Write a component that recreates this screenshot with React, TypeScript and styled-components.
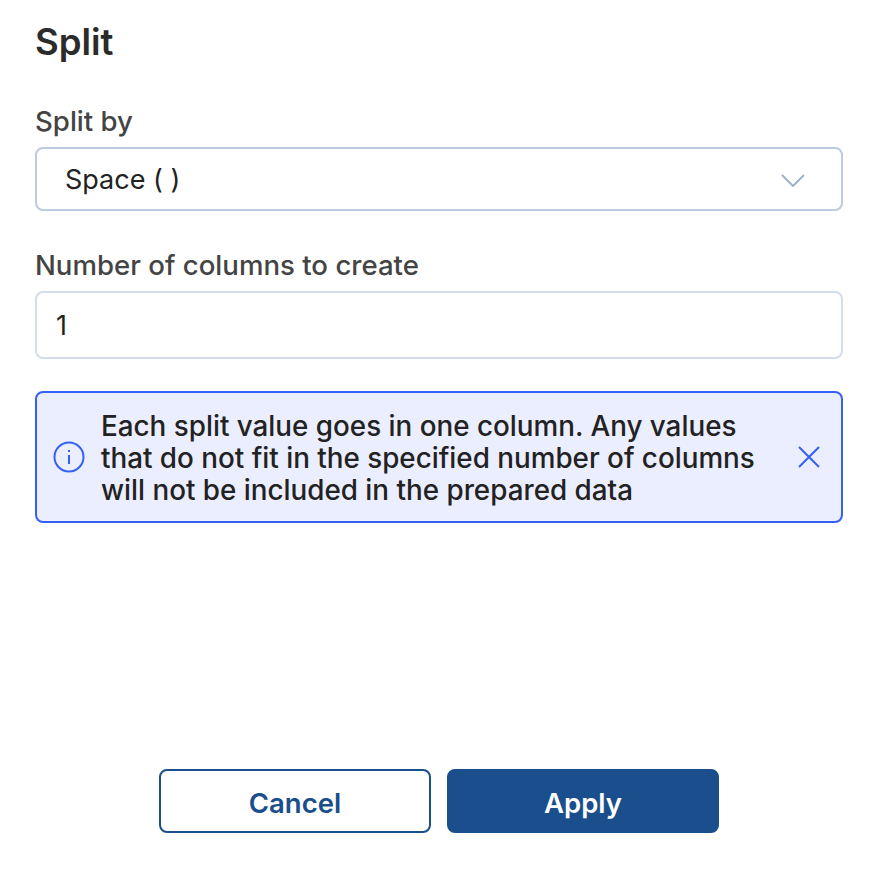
import React from 'react';
import styled, { createGlobalStyle } from 'styled-components';

const GlobalStyle = createGlobalStyle`
  html, body {
    margin: 0;
    padding: 0;
    background: #fff;
  }
`;

const Page = styled.div`
  width: 884px;
  height: 880px;
  box-sizing: border-box;
  padding: 21px 41px 47px 35px;
  display: flex;
  flex-direction: column;
  font-family: Inter, "Liberation Sans", sans-serif;
  color: #222;
`;

const Title = styled.h1`
  margin: 0 0 42px;
  font-size: 36.5px;
  line-height: 42px;
  font-weight: 600;
  color: #2b2b2b;
`;

const Label = styled.label`
  display: block;
  font-size: 27.6px;
  line-height: 32px;
  font-weight: 500;
  color: #444;
  margin-bottom: 10px;
`;

const Field = styled.div<{ $height: number; $border: string }>`
  height: ${(p) => p.$height}px;
  box-sizing: border-box;
  border: 2px solid ${(p) => p.$border};
  border-radius: 8px;
  display: flex;
  align-items: center;
  justify-content: space-between;
  font-size: 27px;
  line-height: 34px;
  color: #222;
`;

const SelectField = styled(Field)`
  padding: 2px 36px 0 28px;
  margin-bottom: 38px;
`;

const InputField = styled(Field)`
  padding: 2px 19px 0;
  margin-bottom: 32px;
`;

const Alert = styled.div`
  height: 132px;
  box-sizing: border-box;
  border: 2px solid #3660f4;
  border-radius: 8px;
  background: #ebeeff;
  display: flex;
  align-items: center;
  padding: 0 20px 0 15px;
`;

const AlertText = styled.div`
  flex: 1;
  margin: 2px 26px 0 15px;
  font-size: 27.8px;
  line-height: 32px;
  font-weight: 500;
  color: #222;
`;

const Footer = styled.div`
  margin-top: auto;
  display: flex;
  justify-content: center;
  gap: 16px;
`;

const Button = styled.button<{ $primary?: boolean }>`
  width: 272px;
  height: 64px;
  box-sizing: border-box;
  padding: 3px 0 0;
  border-radius: 8px;
  border: 2px solid #1a4e8c;
  background: ${(p) => (p.$primary ? '#1a4e8c' : '#fff')};
  color: ${(p) => (p.$primary ? '#fff' : '#1a4e8c')};
  font-family: inherit;
  font-size: 27.5px;
  font-weight: 600;
`;

export default function App() {
  return (
    <Page>
      <GlobalStyle />
      <Title>Split</Title>
      <Label>Split by</Label>
      <SelectField $height={64} $border="#bccbdf">
        Space ( )
        <svg width="24" height="13" viewBox="0 0 24 13" fill="none" stroke="#9fb2c8" strokeWidth="2">
          <path d="M1 1l11 11L23 1" />
        </svg>
      </SelectField>
      <Label>Number of columns to create</Label>
      <InputField $height={68} $border="#d3deea">1</InputField>
      <Alert>
        <svg width="34" height="34" viewBox="0 0 34 34" fill="none" stroke="#3660f4" strokeWidth="2">
          <circle cx="17" cy="17" r="14.5" />
          <path d="M17 15v9M17 10v2" />
        </svg>
        <AlertText>
          Each split value goes in one column. Any values that do not fit in the specified number of columns will not be included in the prepared data
        </AlertText>
        <svg width="24" height="24" viewBox="0 0 24 24" fill="none" stroke="#3660f4" strokeWidth="2">
          <path d="M2 2l20 20M22 2L2 22" />
        </svg>
      </Alert>
      <Footer>
        <Button>Cancel</Button>
        <Button $primary>Apply</Button>
      </Footer>
    </Page>
  );
}
